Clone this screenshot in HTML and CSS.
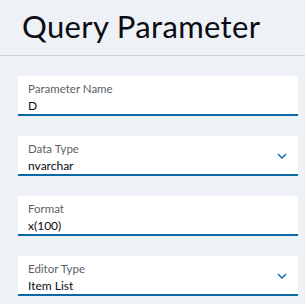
FILE: index.html
```html
<!doctype html>
<html>

<head>
  <title>Query Parameter</title>
  <link rel="stylesheet" href="styles.css">
</head>

<body>
  <header class="page-header">
    <h1>Query Parameter</h1>
  </header>
  <main class="form">
    <label class="field">
      <span class="field__label">Parameter Name</span>
      <span class="field__value">D</span>
    </label>
    <label class="field field--select">
      <span class="field__label">Data Type</span>
      <span class="field__value">nvarchar</span>
      <svg class="field__chevron" viewBox="0 0 10 6" width="10" height="6">
        <path d="M1 1 L5 5 L9 1" fill="none" stroke="currentColor" stroke-width="1.6" />
      </svg>
    </label>
    <label class="field">
      <span class="field__label">Format</span>
      <span class="field__value">x(100)</span>
    </label>
    <label class="field field--select">
      <span class="field__label">Editor Type</span>
      <span class="field__value">Item List</span>
      <svg class="field__chevron" viewBox="0 0 10 6" width="10" height="6">
        <path d="M1 1 L5 5 L9 1" fill="none" stroke="currentColor" stroke-width="1.6" />
      </svg>
    </label>
  </main>
</body>

</html>
```

FILE: styles.css
```css
* {
  box-sizing: border-box;
  margin: 0;
  padding: 0;
}

html,
body {
  height: 100%;
}

body {
  font-family: Lato, "Noto Sans", sans-serif;
  background: #eef1f5;
  color: #111;
}

/** Header */

.page-header {
  height: 56px;
  padding: 0 22px;
  display: flex;
  align-items: center;
  border-bottom: 1px solid #cdd1d6;
}

.page-header h1 {
  font-size: 31px;
  font-weight: normal;
  line-height: 1;
  letter-spacing: 0.35px;
  color: #0b0b14;
  padding-bottom: 2px;
}

/** Fields */

.form {
  display: flex;
  flex-direction: column;
  gap: 20px;
  padding: 20px 7px 0 18px;
}

.field {
  position: relative;
  height: 40px;
  background: #fff;
  border-bottom: 2px solid #0a6aa4;
  padding: 6px 10px 0;
  display: flex;
  flex-direction: column;
}

.field__label {
  font-size: 11.5px;
  line-height: 14px;
  color: #5b5f66;
}

.field__value {
  font-size: 12px;
  line-height: 19px;
  color: #0b0b10;
}

.field__chevron {
  position: absolute;
  right: 11px;
  top: 17px;
  color: #1a6fb8;
}
```
